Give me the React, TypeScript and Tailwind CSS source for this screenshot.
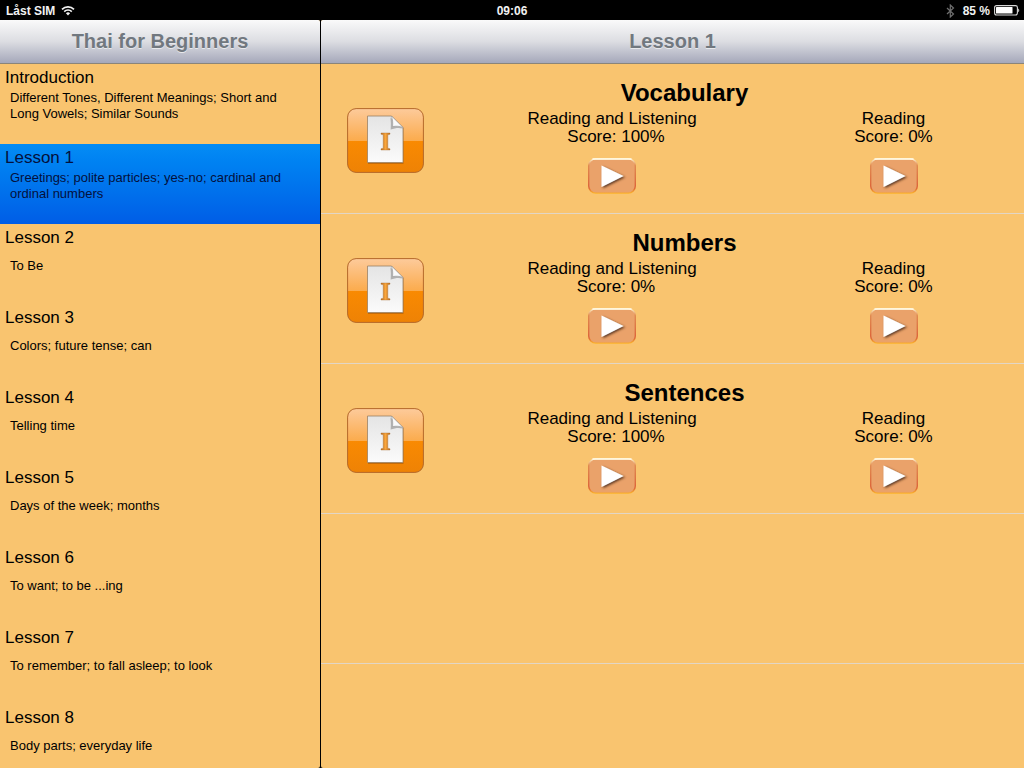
interface Lesson {
  title: string;
  summary: string;
}

interface Exercise {
  name: string;
  listening: number;
  reading: number;
}

const lessons: Lesson[] = [
  {
    title: "Introduction",
    summary: "Different Tones, Different Meanings; Short and Long Vowels; Similar Sounds",
  },
  {
    title: "Lesson 1",
    summary: "Greetings; polite particles; yes-no; cardinal and ordinal numbers",
  },
  { title: "Lesson 2", summary: "To Be" },
  { title: "Lesson 3", summary: "Colors; future tense; can" },
  { title: "Lesson 4", summary: "Telling time" },
  { title: "Lesson 5", summary: "Days of the week; months" },
  { title: "Lesson 6", summary: "To want; to be ...ing" },
  { title: "Lesson 7", summary: "To remember; to fall asleep; to look" },
  { title: "Lesson 8", summary: "Body parts; everyday life" },
];

const exercises: Exercise[] = [
  { name: "Vocabulary", listening: 100, reading: 0 },
  { name: "Numbers", listening: 0, reading: 0 },
  { name: "Sentences", listening: 100, reading: 0 },
];

const selected = "Lesson 1";

function WifiIcon() {
  return (
    <svg width="14" height="11" viewBox="0 0 14 11" fill="none" stroke="#f2f2f2">
      <path d="M1 4.3a8.5 8.5 0 0 1 12 0" strokeWidth="1.7" />
      <path d="M3.2 6.6a5.4 5.4 0 0 1 7.6 0" strokeWidth="1.6" />
      <path d="M7 10.4 4.9 8.2a3 3 0 0 1 4.2 0z" fill="#f2f2f2" stroke="none" />
    </svg>
  );
}

function BluetoothIcon() {
  return (
    <svg width="9" height="14" viewBox="0 0 9 14" fill="none" stroke="#6f6f6f" strokeWidth="1.2">
      <path d="M1 4l6.500 6L4.300 13V1L7.500 4 1 10" />
    </svg>
  );
}

function BatteryIcon() {
  return (
    <svg width="26" height="11" viewBox="0 0 26 11">
      <rect x="0.6" y="0.6" width="22.8" height="9.4" rx="2" fill="none" stroke="#d8d8d8" strokeWidth="1.1" />
      <rect x="2" y="2" width="16.5" height="6.6" rx="0.6" fill="#fff" />
      <path d="M24.2 3.4c1.4.5 1.4 3.3 0 3.8z" fill="#d8d8d8" />
    </svg>
  );
}

function StatusBar() {
  return (
    <div className="grid h-5 shrink-0 grid-cols-3 items-center bg-black pt-px text-xs font-bold text-[#f2f2f2]">
      <div className="flex items-center gap-1.5 pl-1.5">
        <span>Låst SIM</span>
        <WifiIcon />
      </div>
      <span className="text-center">09:06</span>
      <div className="flex items-center justify-end gap-1 pr-1">
        <BluetoothIcon />
        <span className="pl-1">85 %</span>
        <BatteryIcon />
      </div>
    </div>
  );
}

function TitleBar({ title }: { title: string }) {
  return (
    <header className="flex h-11 shrink-0 items-center justify-center border-b border-[#8b8579] bg-linear-to-b from-[#fafafa] via-[#dcdde2] to-[#a5a8ba] pb-px">
      <h1 className="text-xl font-bold text-[#71787f] [text-shadow:0_1px_0_#e8e9ec]">{title}</h1>
    </header>
  );
}

function LessonRow({ lesson, active }: { lesson: Lesson; active: boolean }) {
  return (
    <li>
      <button
        type="button"
        aria-current={active}
        className={`flex h-20 w-full flex-col justify-start px-[5px] pt-1 text-left ${
          active ? "bg-linear-to-b from-[#058cf5] to-[#015de6] text-[#04103c]" : ""
        }`}
      >
        <span className="text-[17px] leading-5">{lesson.title}</span>
        <span className="flex h-9 items-center pr-6 pl-[5px] text-[13px] leading-4">{lesson.summary}</span>
      </button>
    </li>
  );
}

function DocumentIcon() {
  return (
    <svg width="77" height="65" viewBox="0 0 77 65">
      <defs>
        <linearGradient id="tile-top" x1="0" y1="0" x2="0" y2="1">
          <stop offset="0" stopColor="#fdcb9c" />
          <stop offset="1" stopColor="#fbab4c" />
        </linearGradient>
        <linearGradient id="tile-bottom" x1="0" y1="0" x2="0" y2="1">
          <stop offset="0" stopColor="#f98a02" />
          <stop offset="1" stopColor="#ee8205" />
        </linearGradient>
        <linearGradient id="sheet" x1="0" y1="0" x2="0" y2="1">
          <stop offset="0" stopColor="#e4e4e4" />
          <stop offset="1" stopColor="#fbfbfb" />
        </linearGradient>
        <linearGradient id="numeral" x1="0" y1="0" x2="1" y2="0">
          <stop offset="0" stopColor="#b9691c" />
          <stop offset="0.5" stopColor="#f9a63c" />
          <stop offset="1" stopColor="#b9691c" />
        </linearGradient>
        <clipPath id="tile">
          <rect x="0.5" y="0.5" width="76" height="64" rx="8.5" />
        </clipPath>
      </defs>
      <g clipPath="url(#tile)">
        <rect width="77" height="33" fill="url(#tile-top)" />
        <rect y="33" width="77" height="32" fill="url(#tile-bottom)" />
      </g>
      <rect x="0.6" y="0.6" width="75.8" height="63.8" rx="8.5" fill="none" stroke="#b4682a" strokeWidth="1" />
      <path d="M21 9h24l11.500 11.500V56H21z" fill="#8a4c10" opacity="0.45" />
      <path d="M20.500 8h24L56 19.500V54.500H20.500z" fill="url(#sheet)" stroke="#9b8266" strokeWidth="0.8" />
      <path d="M43.500 9.500c.5 4 .5 8 .2 12 4-1.500 8-2 12.300-1z" fill="#777" opacity="0.5" />
      <path d="M44.500 8c1.200 3.400 1.500 7 1.100 10.600 3.400-.8 6.900-.6 10.400.9z" fill="#fafafa" stroke="#8f8f8f" strokeWidth="0.5" />
      <path
        d="M34 25h9v1.200l-2.200.6v13.400l2.200.6V42h-9v-1.200l2.200-.6V26.800L34 26.200z"
        fill="url(#numeral)"
        stroke="#a8713a"
        strokeWidth="0.4"
      />
    </svg>
  );
}

function PlayIcon() {
  return (
    <svg width="48" height="36" viewBox="0 0 48 36">
      <defs>
        <linearGradient id="play-edge" x1="0" y1="0" x2="0" y2="1">
          <stop offset="0" stopColor="#fff3cf" />
          <stop offset="0.18" stopColor="#e08a50" />
          <stop offset="0.85" stopColor="#dc6338" />
          <stop offset="1" stopColor="#fbb22c" />
        </linearGradient>
        <filter id="play-shadow" x="-20%" y="-20%" width="150%" height="150%">
          <feDropShadow dx="1.500" dy="1.200" stdDeviation="1.300" floodColor="#4a2a12" floodOpacity="0.9" />
        </filter>
      </defs>
      <rect x="0.7" y="0.9" width="46.600" height="34.200" rx="7" fill="#eaa26a" stroke="url(#play-edge)" strokeWidth="1.400" />
      <path d="M5 1h38" stroke="#fffbe8" strokeWidth="1.500" strokeLinecap="round" />
      <path d="M13.500 7.500 35.500 18 13.500 29z" fill="#fff" filter="url(#play-shadow)" />
    </svg>
  );
}

function Score({ label, score, className = "" }: { label: string; score: number; className?: string }) {
  return (
    <div className="flex flex-col items-center text-center text-[17px] leading-[18px]">
      <p>{label}</p>
      <p className={className}>Score: {score}%</p>
      <button type="button" aria-label={`Play ${label}`} className="mt-3">
        <PlayIcon />
      </button>
    </div>
  );
}

function ExerciseRow({ exercise }: { exercise: Exercise }) {
  return (
    <li className="grid h-[150px] grid-cols-[128px_326fr_237fr] content-start border-b border-[#e2d6c6] pt-[15px] pr-3">
      <h2 className="col-span-3 col-start-1 row-start-1 mb-[3px] pl-9 text-center text-2xl leading-7 font-bold">
        {exercise.name}
      </h2>
      <button
        type="button"
        aria-label={`${exercise.name} document`}
        className="col-start-1 row-span-2 row-start-1 mt-2 ml-[26px] self-center justify-self-start"
      >
        <DocumentIcon />
      </button>
      <div className="col-start-2 row-start-2">
        <Score label="Reading and Listening" score={exercise.listening} className="pl-2" />
      </div>
      <div className="col-start-3 row-start-2">
        <Score label="Reading" score={exercise.reading} />
      </div>
    </li>
  );
}

export default function App() {
  return (
    <div className="flex h-screen flex-col bg-black font-['Liberation_Sans',Arial,sans-serif] text-black">
      <StatusBar />
      <div className="flex min-h-0 flex-1 gap-px">
        <nav className="flex w-80 shrink-0 flex-col overflow-hidden rounded-r-xs bg-[#f9c46f]">
          <TitleBar title="Thai for Beginners" />
          <ul className="min-h-0 flex-1 overflow-y-auto [scrollbar-width:none]">
            {lessons.map((lesson) => (
              <LessonRow key={lesson.title} lesson={lesson} active={lesson.title === selected} />
            ))}
          </ul>
        </nav>
        <main className="flex min-w-0 flex-1 flex-col overflow-hidden rounded-l-xs bg-[#f9c46f]">
          <TitleBar title={selected} />
          <ul className="min-h-0 flex-1 overflow-y-auto [scrollbar-width:none]">
            {exercises.map((exercise) => (
              <ExerciseRow key={exercise.name} exercise={exercise} />
            ))}
            {/* empty row below the last exercise */}
            <li className="h-[150px] border-b border-[#e2d6c6]" />
          </ul>
        </main>
      </div>
    </div>
  );
}
